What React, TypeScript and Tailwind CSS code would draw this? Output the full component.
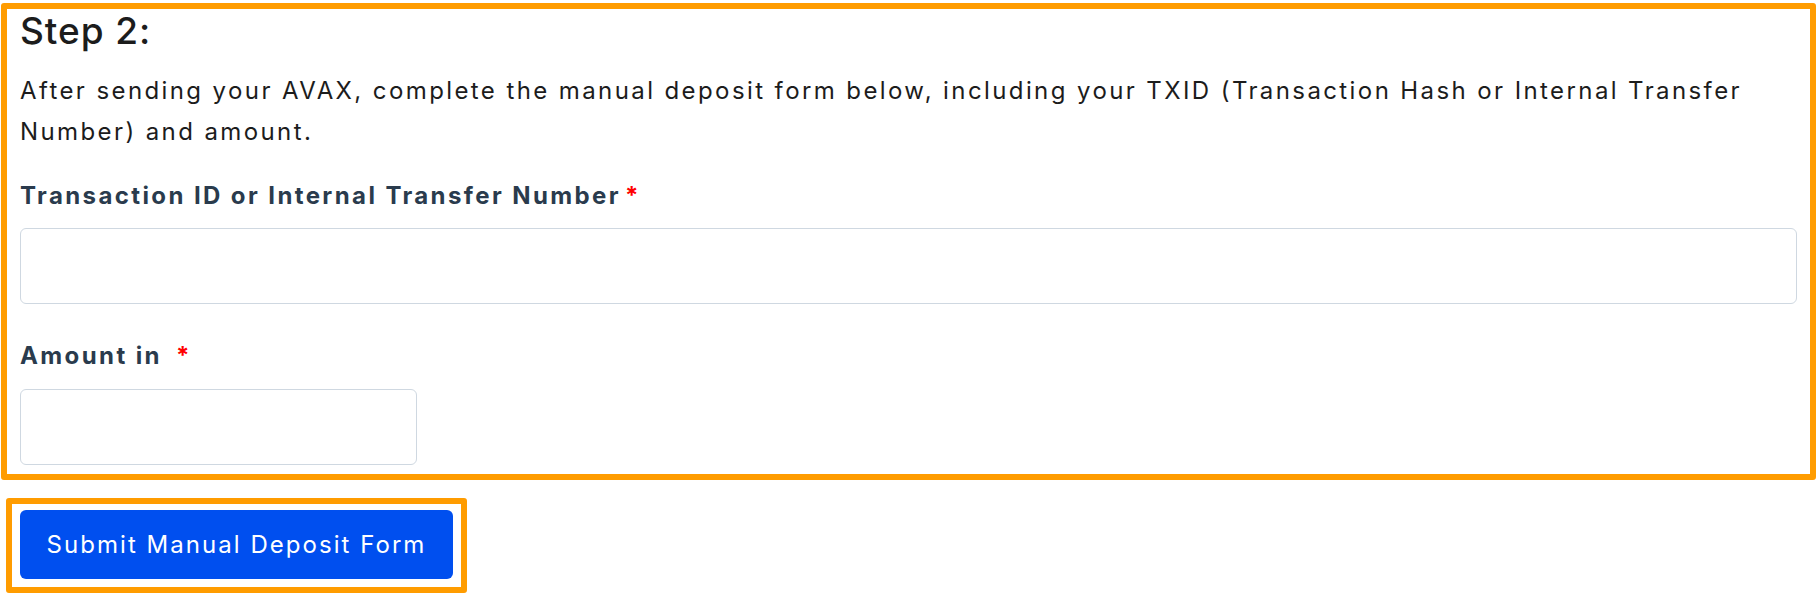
import React from 'react';

export default function App() {
  const [txid, setTxid] = React.useState('');
  const [amount, setAmount] = React.useState('');

  return (
    <div className="min-h-[594px] bg-white pl-px pr-1 pt-[3px] font-['Inter',sans-serif]">
      <div className="rounded-[3px] border-[6px] border-[#ff9c00] px-[13px] pb-[9px]">
        <h2 className="text-[37px] leading-[1.2] font-medium tracking-[0.025em] text-[#1c1c1c]">Step 2:</h2>
        <p className="mt-[17px] text-[24px] leading-[41px] tracking-[0.1em] text-[#1c1c1c]">
          After sending your AVAX, complete the manual deposit form below, including your TXID (Transaction Hash or Internal Transfer Number) and amount.
        </p>

        <label className="mt-[26px] block text-[24px] leading-[36px] font-bold tracking-[0.1em] text-[#2a3b4d]">
          Transaction ID or Internal Transfer Number<span className="ml-1 text-[#ff0000]">*</span>
        </label>
        <input
          value={txid}
          onChange={(e) => setTxid(e.target.value)}
          className="mt-[14px] block h-[76px] w-full rounded-md border border-[#cfd8e1] px-4 text-[24px] outline-none"
        />

        <label className="mt-[34px] block text-[24px] leading-[36px] font-bold tracking-[0.1em] text-[#2a3b4d]">
          Amount in <span className="ml-1.5 text-[#ff0000]">*</span>
        </label>
        <input
          value={amount}
          onChange={(e) => setAmount(e.target.value)}
          className="mt-[15px] block h-[76px] w-[397px] rounded-md border border-[#cfd8e1] px-4 text-[24px] outline-none"
        />
      </div>

      <div className="ml-[5px] mt-[18px] inline-block rounded-[3px] border-[6px] border-[#ff9c00] px-2 pt-[6px] pb-2">
        <button className="h-[69px] w-[433px] rounded-md bg-[#004fef] text-[24px] tracking-[0.085em] text-white">
          Submit Manual Deposit Form
        </button>
      </div>
    </div>
  );
}
